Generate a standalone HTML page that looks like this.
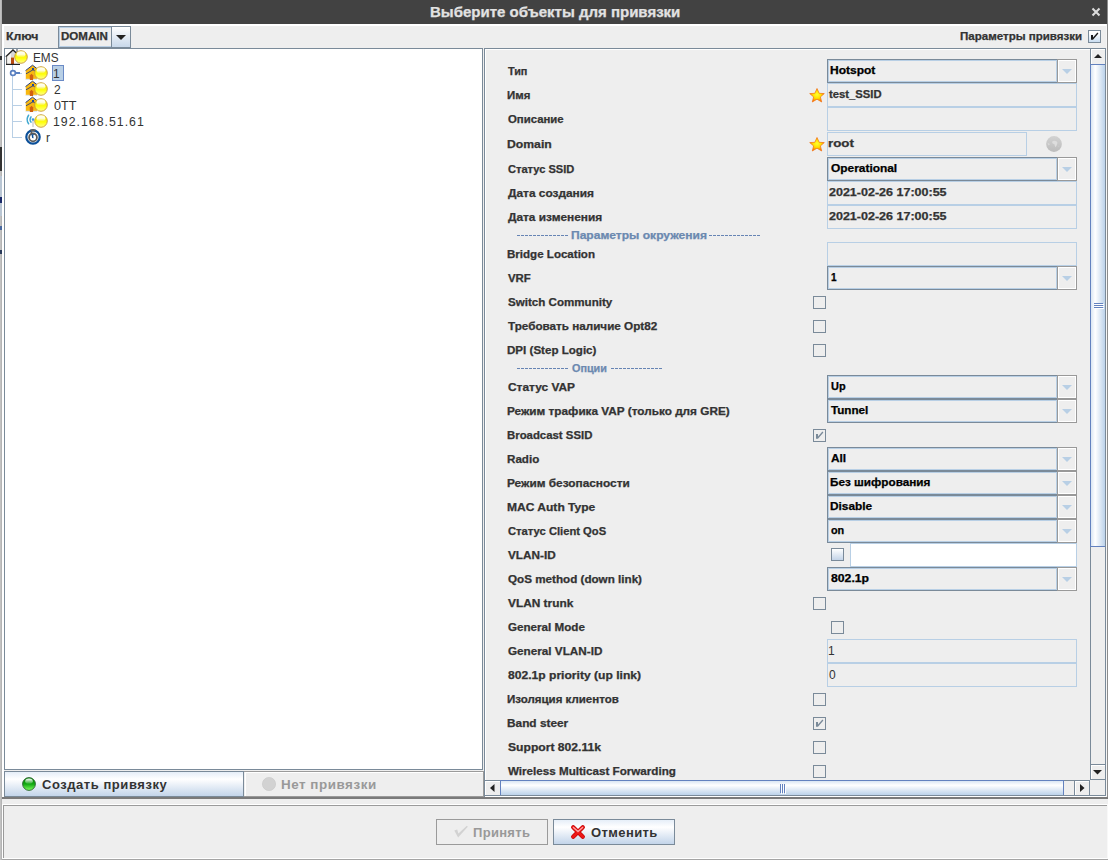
<!DOCTYPE html><html><head><meta charset="utf-8"><style>
html,body{margin:0;padding:0;width:1108px;height:860px;overflow:hidden;background:#eeeeee;position:relative;font-family:"Liberation Sans",sans-serif}
div{box-sizing:border-box}
.t{position:absolute;white-space:nowrap;line-height:1;transform-origin:0 0}
.b{-webkit-text-stroke:0.25px currentColor}
svg{position:absolute;overflow:visible}
</style></head><body>
<div style="position:absolute;left:0px;top:0px;width:2px;height:860px;background:#c2c2c2"></div>
<div style="position:absolute;left:1px;top:0px;width:1px;height:860px;background:#b4b4b4"></div>
<div style="position:absolute;left:0px;top:147px;width:2px;height:24px;background:#333333"></div>
<div style="position:absolute;left:0px;top:176px;width:2px;height:40px;background:#b9c6d4"></div>
<div style="position:absolute;left:0px;top:197px;width:2px;height:6px;background:#1a2a6a"></div>
<div style="position:absolute;left:0px;top:56px;width:2px;height:4px;background:#333"></div>
<div style="position:absolute;left:0px;top:226px;width:2px;height:4px;background:#4a6aa0"></div>
<div style="position:absolute;left:0px;top:250px;width:2px;height:4px;background:#2a3a5a"></div>
<div style="position:absolute;left:2px;top:0px;width:1106px;height:24px;background:#424242"></div>
<div class="t b" style="left:429.93px;top:5px;font-size:14px;font-weight:bold;color:#e2e2e2;transform:scaleX(1.0720);">Выберите объекты для привязки</div>
<svg style="left:1091px;top:7px" width="10" height="10"><path d="M1.5 1.5L8.5 8.5M8.5 1.5L1.5 8.5" stroke="#dcdcdc" stroke-width="2.1"/></svg>
<div style="position:absolute;left:2px;top:24px;width:1105px;height:2px;background:#ffffff"></div>
<div style="position:absolute;left:2px;top:24px;width:2px;height:836px;background:#ffffff"></div>
<div style="position:absolute;left:1106px;top:24px;width:1px;height:836px;background:#f6f6f6"></div>
<div style="position:absolute;left:1107px;top:0px;width:1px;height:799px;background:#8c8c8c"></div>
<div class="t b" style="left:5.77px;top:32px;font-size:10px;font-weight:bold;color:#333;transform:scaleX(1.2280);">Ключ</div>
<div style="position:absolute;left:58px;top:26px;width:73px;height:22px;border:1px solid #7a8a99;background:#eeeeee"></div>
<div style="position:absolute;left:59px;top:27px;width:52px;height:20px;border:1px solid #b8cfe5;border-right:0"></div>
<div class="t b" style="left:60.85px;top:32px;font-size:10px;font-weight:bold;color:#333;transform:scaleX(1.1538);">DOMAIN</div>
<div style="position:absolute;left:111px;top:26px;width:20px;height:22px;border:1px solid #7a8a99;background:linear-gradient(#ffffff,#c8d8ea)"></div>
<svg style="left:116px;top:35px" width="10" height="5"><path d="M0 0H10L5 5Z" fill="#222"/></svg>
<div class="t b" style="left:959.85px;top:32px;font-size:10px;font-weight:bold;color:#333;transform:scaleX(1.1538);">Параметры привязки</div>
<div style="position:absolute;left:1088px;top:30px;width:13px;height:13px;border:1px solid #7a8a99;background:linear-gradient(#ffffff 20%,#c8dcf0)"></div>
<svg style="left:1089px;top:31px" width="11" height="11"><path d="M2 4H4V6.6L8.4 1.6L9.4 2.6L4 8.8H2Z" fill="#1a1a1a"/></svg>
<div style="position:absolute;left:4px;top:48px;width:479px;height:722px;border:1px solid #7a8a99;background:#ffffff"></div>
<div style="position:absolute;left:12px;top:64px;width:1px;height:74px;background:#b8cfe5"></div>
<div style="position:absolute;left:13px;top:73px;width:9px;height:1px;background:#b8cfe5"></div>
<div style="position:absolute;left:13px;top:89px;width:9px;height:1px;background:#b8cfe5"></div>
<div style="position:absolute;left:13px;top:105px;width:9px;height:1px;background:#b8cfe5"></div>
<div style="position:absolute;left:13px;top:121px;width:9px;height:1px;background:#b8cfe5"></div>
<div style="position:absolute;left:13px;top:137px;width:9px;height:1px;background:#b8cfe5"></div>
<svg style="left:9px;top:69px" width="14" height="8"><rect x="6" y="3" width="5" height="2" fill="#5a80c0"/><circle cx="4" cy="4" r="2.4" fill="#fff" stroke="#5a80c0" stroke-width="1.7"/></svg>
<svg style="left:5px;top:48px" width="16" height="17"><rect x="11" y="1" width="2" height="4" fill="#9aa0a8"/><path d="M1.5 8.5L8 2.5L14.5 8.5V16H1.5Z" fill="#f6f4f0"/><path d="M6 4.5L8 3L10 4.5V9H6Z" fill="#d8d8d8"/><path d="M0.8 8.8L8 2L13.5 7" stroke="#222" stroke-width="1.3" fill="none"/><path d="M1.6 8.5V16" stroke="#555" stroke-width="0.9"/><rect x="6" y="9.5" width="3" height="6.5" fill="#b84a10"/><rect x="1" y="15.8" width="14" height="1.2" fill="#222"/></svg>
<svg style="left:14px;top:50px" width="14" height="14"><defs><linearGradient id="ybe" x1="0" y1="0" x2="0" y2="1"><stop offset="0" stop-color="#f0e000"/><stop offset="0.6" stop-color="#ffff10"/><stop offset="1" stop-color="#ffff90"/></linearGradient><linearGradient id="yhe" x1="0" y1="0" x2="0" y2="1"><stop offset="0" stop-color="#ffffff"/><stop offset="0.5" stop-color="#ffffff" stop-opacity="0.85"/><stop offset="1" stop-color="#ffffff" stop-opacity="0"/></linearGradient></defs><circle cx="7" cy="7" r="6.3" fill="url(#ybe)" stroke="#c89a40" stroke-width="0.9"/><ellipse cx="7" cy="4.4" rx="4.4" ry="3.1" fill="url(#yhe)"/></svg>
<div class="t" style="left:33.02px;top:52px;font-size:12px;font-weight:normal;color:#333;transform:scaleX(0.9800);">EMS</div>
<svg style="left:25px;top:64px" width="14" height="16"><path d="M0.8 6.5L7.5 1.2L12 4.5V15.5H0.8Z" fill="#f8b810"/><path d="M0.5 6.6L7.5 1.2L12.5 5" stroke="#2a3f7a" stroke-width="1" fill="none"/><path d="M1 9.8L8 5.8L10 7" stroke="#2a3f7a" stroke-width="0.9" fill="none"/><rect x="7" y="4" width="2" height="2" fill="#1a4aa0"/><path d="M4.8 16V11.5L6.5 9.8L8.2 11.5V16Z" fill="#d06010"/><rect x="0.8" y="14.8" width="3.8" height="1.2" fill="#dce6f2"/><rect x="8.2" y="14.8" width="3.8" height="1.2" fill="#dce6f2"/></svg>
<svg style="left:34px;top:66px" width="14" height="14"><defs><linearGradient id="yb0" x1="0" y1="0" x2="0" y2="1"><stop offset="0" stop-color="#f0e000"/><stop offset="0.6" stop-color="#ffff10"/><stop offset="1" stop-color="#ffff90"/></linearGradient><linearGradient id="yh0" x1="0" y1="0" x2="0" y2="1"><stop offset="0" stop-color="#ffffff"/><stop offset="0.5" stop-color="#ffffff" stop-opacity="0.85"/><stop offset="1" stop-color="#ffffff" stop-opacity="0"/></linearGradient></defs><circle cx="7" cy="7" r="6.3" fill="url(#yb0)" stroke="#c89a40" stroke-width="0.9"/><ellipse cx="7" cy="4.4" rx="4.4" ry="3.1" fill="url(#yh0)"/></svg>
<svg style="left:25px;top:80px" width="14" height="16"><path d="M0.8 6.5L7.5 1.2L12 4.5V15.5H0.8Z" fill="#f8b810"/><path d="M0.5 6.6L7.5 1.2L12.5 5" stroke="#2a3f7a" stroke-width="1" fill="none"/><path d="M1 9.8L8 5.8L10 7" stroke="#2a3f7a" stroke-width="0.9" fill="none"/><rect x="7" y="4" width="2" height="2" fill="#1a4aa0"/><path d="M4.8 16V11.5L6.5 9.8L8.2 11.5V16Z" fill="#d06010"/><rect x="0.8" y="14.8" width="3.8" height="1.2" fill="#dce6f2"/><rect x="8.2" y="14.8" width="3.8" height="1.2" fill="#dce6f2"/></svg>
<svg style="left:34px;top:82px" width="14" height="14"><defs><linearGradient id="yb1" x1="0" y1="0" x2="0" y2="1"><stop offset="0" stop-color="#f0e000"/><stop offset="0.6" stop-color="#ffff10"/><stop offset="1" stop-color="#ffff90"/></linearGradient><linearGradient id="yh1" x1="0" y1="0" x2="0" y2="1"><stop offset="0" stop-color="#ffffff"/><stop offset="0.5" stop-color="#ffffff" stop-opacity="0.85"/><stop offset="1" stop-color="#ffffff" stop-opacity="0"/></linearGradient></defs><circle cx="7" cy="7" r="6.3" fill="url(#yb1)" stroke="#c89a40" stroke-width="0.9"/><ellipse cx="7" cy="4.4" rx="4.4" ry="3.1" fill="url(#yh1)"/></svg>
<svg style="left:25px;top:96px" width="14" height="16"><path d="M0.8 6.5L7.5 1.2L12 4.5V15.5H0.8Z" fill="#f8b810"/><path d="M0.5 6.6L7.5 1.2L12.5 5" stroke="#2a3f7a" stroke-width="1" fill="none"/><path d="M1 9.8L8 5.8L10 7" stroke="#2a3f7a" stroke-width="0.9" fill="none"/><rect x="7" y="4" width="2" height="2" fill="#1a4aa0"/><path d="M4.8 16V11.5L6.5 9.8L8.2 11.5V16Z" fill="#d06010"/><rect x="0.8" y="14.8" width="3.8" height="1.2" fill="#dce6f2"/><rect x="8.2" y="14.8" width="3.8" height="1.2" fill="#dce6f2"/></svg>
<svg style="left:34px;top:98px" width="14" height="14"><defs><linearGradient id="yb2" x1="0" y1="0" x2="0" y2="1"><stop offset="0" stop-color="#f0e000"/><stop offset="0.6" stop-color="#ffff10"/><stop offset="1" stop-color="#ffff90"/></linearGradient><linearGradient id="yh2" x1="0" y1="0" x2="0" y2="1"><stop offset="0" stop-color="#ffffff"/><stop offset="0.5" stop-color="#ffffff" stop-opacity="0.85"/><stop offset="1" stop-color="#ffffff" stop-opacity="0"/></linearGradient></defs><circle cx="7" cy="7" r="6.3" fill="url(#yb2)" stroke="#c89a40" stroke-width="0.9"/><ellipse cx="7" cy="4.4" rx="4.4" ry="3.1" fill="url(#yh2)"/></svg>
<div style="position:absolute;left:52px;top:65px;width:12px;height:16px;border:1px solid #6a8ac6;background:#b8cfe5"></div>
<div class="t" style="left:53.00px;top:68px;font-size:12px;font-weight:normal;color:#333;">1</div>
<div class="t" style="left:54.00px;top:84px;font-size:12px;font-weight:normal;color:#333;">2</div>
<div class="t" style="left:54.00px;top:100px;font-size:12px;font-weight:normal;color:#333;transform:scaleX(1.0476);">0TT</div>
<svg style="left:25px;top:113px" width="12" height="16"><path d="M3.6 2.2Q0.6 6.5 3.6 10.8M6 3.8Q4.2 6.5 6 9.2" stroke="#40a8d0" stroke-width="1.5" fill="none" stroke-linecap="round"/><rect x="7.3" y="7" width="1.4" height="7" fill="#d0d0d0"/><circle cx="8" cy="6.5" r="1.3" fill="#3a98e0"/></svg>
<svg style="left:34px;top:114px" width="14" height="14"><defs><linearGradient id="ybw" x1="0" y1="0" x2="0" y2="1"><stop offset="0" stop-color="#f0e000"/><stop offset="0.6" stop-color="#ffff10"/><stop offset="1" stop-color="#ffff90"/></linearGradient><linearGradient id="yhw" x1="0" y1="0" x2="0" y2="1"><stop offset="0" stop-color="#ffffff"/><stop offset="0.5" stop-color="#ffffff" stop-opacity="0.85"/><stop offset="1" stop-color="#ffffff" stop-opacity="0"/></linearGradient></defs><circle cx="7" cy="7" r="6.3" fill="url(#ybw)" stroke="#c89a40" stroke-width="0.9"/><ellipse cx="7" cy="4.4" rx="4.4" ry="3.1" fill="url(#yhw)"/></svg>
<div class="t" style="left:52.98px;top:116px;font-size:12px;font-weight:normal;color:#333;transform:scaleX(1.0230);letter-spacing:1px">192.168.51.61</div>
<svg style="left:25px;top:129px" width="16" height="16"><circle cx="8" cy="8" r="6.7" fill="#fff" stroke="#0b4f98" stroke-width="2.2"/><path d="M5.6 1.6A6.7 6.7 0 0 1 10.4 1.6" stroke="#606060" stroke-width="2.3" fill="none"/><circle cx="8" cy="8.4" r="3.9" fill="none" stroke="#5a5a5a" stroke-width="1.8"/><path d="M6.2 2.5L6.8 5.2" stroke="#5a5a5a" stroke-width="1.6"/><path d="M6.4 5.2H9.6L8.2 6.6L8.6 9.2L7.2 9Z" fill="#0b4f98"/></svg>
<div class="t" style="left:46.00px;top:132px;font-size:12px;font-weight:normal;color:#333;">r</div>
<div style="position:absolute;left:4px;top:771px;width:240px;height:26px;border:1px solid #7a8a99;background:linear-gradient(#e6eef8 0%,#ffffff 30%,#c3d5ea 100%)"></div>
<div style="position:absolute;left:244px;top:771px;width:240px;height:26px;border:1px solid #9a9a9a;border-left:0;background:#eeeeee"></div>
<div style="position:absolute;left:245px;top:772px;width:238px;height:24px;border-top:1px solid #fff;border-left:1px solid #fff"></div>
<div class="t b" style="left:42.00px;top:778px;font-size:13px;font-weight:bold;color:#333;letter-spacing:0.55px;-webkit-text-stroke:0">Создать привязку</div>
<div class="t b" style="left:280.97px;top:778px;font-size:13px;font-weight:bold;color:#999;transform:scaleX(1.0333);letter-spacing:0.5px;-webkit-text-stroke:0">Нет привязки</div>
<svg style="left:22px;top:777px" width="14" height="14"><defs><linearGradient id="gb" x1="0" y1="0" x2="0" y2="1"><stop offset="0" stop-color="#008a00"/><stop offset="0.5" stop-color="#10a810"/><stop offset="1" stop-color="#80ff60"/></linearGradient><linearGradient id="gh" x1="0" y1="0" x2="0" y2="1"><stop offset="0" stop-color="#ffffff"/><stop offset="1" stop-color="#ffffff" stop-opacity="0.1"/></linearGradient></defs><circle cx="7" cy="7" r="6.4" fill="url(#gb)" stroke="#2a6030" stroke-width="0.9"/><ellipse cx="7" cy="4.2" rx="3.8" ry="2.6" fill="url(#gh)"/></svg>
<svg style="left:262px;top:777px" width="14" height="14"><circle cx="7" cy="7" r="6.6" fill="#d2d2d2" stroke="#c6c6c6" stroke-width="0.6"/></svg>
<div style="position:absolute;left:484px;top:48px;width:622px;height:749px;border:1px solid #7a8a99;border-bottom:0;background:#eeeeee"></div>
<div style="position:absolute;left:485px;top:49px;width:605px;height:1px;background:#ffffff"></div>
<div style="position:absolute;left:485px;top:49px;width:1px;height:731px;background:#ffffff"></div>
<div class="t b" style="left:508.00px;top:67px;font-size:10px;font-weight:bold;color:#333;transform:scaleX(1.0833);">Тип</div>
<div style="position:absolute;left:827px;top:59px;width:250px;height:24px;border:1px solid #7a8a99;background:#eeeeee"></div>
<div style="position:absolute;left:828px;top:60px;width:229px;height:22px;border:1px solid #b8cfe5"></div>
<div style="position:absolute;left:1057px;top:59px;width:20px;height:24px;border:1px solid #999999;background:#eeeeee"></div>
<div style="position:absolute;left:1058px;top:60px;width:18px;height:22px;border:1px solid #ffffff"></div>
<svg style="left:1062px;top:69px" width="10" height="5"><path d="M0 0H10L5 5Z" fill="#b8cfe5"/></svg>
<div class="t b" style="left:829.80px;top:66px;font-size:10px;font-weight:bold;color:#000;transform:scaleX(1.2000);">Hotspot</div>
<div class="t b" style="left:506.86px;top:91px;font-size:10px;font-weight:bold;color:#333;transform:scaleX(1.1421);">Имя</div>
<div style="position:absolute;left:827px;top:83px;width:250px;height:24px;border:1px solid #b8cfe5;background:#eeeeee"></div>
<div class="t b" style="left:829.00px;top:90px;font-size:10px;font-weight:bold;color:#333;transform:scaleX(1.1277);">test_SSID</div>
<div class="t b" style="left:508.00px;top:115px;font-size:10px;font-weight:bold;color:#333;transform:scaleX(1.1367);">Описание</div>
<div style="position:absolute;left:827px;top:107px;width:250px;height:24px;border:1px solid #b8cfe5;background:#eeeeee"></div>
<div class="t b" style="left:506.78px;top:140px;font-size:10px;font-weight:bold;color:#333;transform:scaleX(1.2200);">Domain</div>
<div style="position:absolute;left:827px;top:132px;width:200px;height:24px;border:1px solid #b8cfe5;background:#eeeeee"></div>
<div class="t b" style="left:827.67px;top:139px;font-size:10px;font-weight:bold;color:#333;transform:scaleX(1.3333);">root</div>
<div class="t b" style="left:508.00px;top:165px;font-size:10px;font-weight:bold;color:#333;transform:scaleX(1.1083);">Статус SSID</div>
<div style="position:absolute;left:827px;top:157px;width:250px;height:24px;border:1px solid #7a8a99;background:#eeeeee"></div>
<div style="position:absolute;left:828px;top:158px;width:229px;height:22px;border:1px solid #b8cfe5"></div>
<div style="position:absolute;left:1057px;top:157px;width:20px;height:24px;border:1px solid #999999;background:#eeeeee"></div>
<div style="position:absolute;left:1058px;top:158px;width:18px;height:22px;border:1px solid #ffffff"></div>
<svg style="left:1062px;top:167px" width="10" height="5"><path d="M0 0H10L5 5Z" fill="#b8cfe5"/></svg>
<div class="t b" style="left:831.00px;top:164px;font-size:10px;font-weight:bold;color:#000;transform:scaleX(1.1909);">Operational</div>
<div class="t b" style="left:508.00px;top:189px;font-size:10px;font-weight:bold;color:#333;transform:scaleX(1.1889);">Дата создания</div>
<div style="position:absolute;left:827px;top:181px;width:250px;height:24px;border:1px solid #b8cfe5;background:#eeeeee"></div>
<div class="t b" style="left:829.00px;top:188px;font-size:10px;font-weight:bold;color:#333;transform:scaleX(1.2511);">2021-02-26 17:00:55</div>
<div class="t b" style="left:508.00px;top:213px;font-size:10px;font-weight:bold;color:#333;transform:scaleX(1.1861);">Дата изменения</div>
<div style="position:absolute;left:827px;top:205px;width:250px;height:24px;border:1px solid #b8cfe5;background:#eeeeee"></div>
<div class="t b" style="left:829.00px;top:212px;font-size:10px;font-weight:bold;color:#333;transform:scaleX(1.2511);">2021-02-26 17:00:55</div>
<div class="t b" style="left:506.84px;top:250px;font-size:10px;font-weight:bold;color:#333;transform:scaleX(1.1560);">Bridge Location</div>
<div style="position:absolute;left:827px;top:242px;width:250px;height:24px;border:1px solid #b8cfe5;background:#eeeeee"></div>
<div class="t b" style="left:508.00px;top:274px;font-size:10px;font-weight:bold;color:#333;transform:scaleX(1.1400);">VRF</div>
<div style="position:absolute;left:827px;top:266px;width:250px;height:24px;border:1px solid #7a8a99;background:#eeeeee"></div>
<div style="position:absolute;left:828px;top:267px;width:229px;height:22px;border:1px solid #b8cfe5"></div>
<div style="position:absolute;left:1057px;top:266px;width:20px;height:24px;border:1px solid #999999;background:#eeeeee"></div>
<div style="position:absolute;left:1058px;top:267px;width:18px;height:22px;border:1px solid #ffffff"></div>
<svg style="left:1062px;top:276px" width="10" height="5"><path d="M0 0H10L5 5Z" fill="#b8cfe5"/></svg>
<div class="t b" style="left:831.00px;top:273px;font-size:10px;font-weight:bold;color:#000;">1</div>
<div class="t b" style="left:508.00px;top:298px;font-size:10px;font-weight:bold;color:#333;transform:scaleX(1.1589);">Switch Community</div>
<div style="position:absolute;left:813px;top:296px;width:13px;height:13px;border:1px solid #7a8a99;background:#eeeeee"></div>
<div class="t b" style="left:508.00px;top:322px;font-size:10px;font-weight:bold;color:#333;transform:scaleX(1.1685);">Требовать наличие Opt82</div>
<div style="position:absolute;left:813px;top:320px;width:13px;height:13px;border:1px solid #7a8a99;background:#eeeeee"></div>
<div class="t b" style="left:506.84px;top:346px;font-size:10px;font-weight:bold;color:#333;transform:scaleX(1.1579);">DPI (Step Logic)</div>
<div style="position:absolute;left:813px;top:344px;width:13px;height:13px;border:1px solid #7a8a99;background:#eeeeee"></div>
<div class="t b" style="left:508.00px;top:383px;font-size:10px;font-weight:bold;color:#333;transform:scaleX(1.1893);">Статус VAP</div>
<div style="position:absolute;left:827px;top:375px;width:250px;height:24px;border:1px solid #7a8a99;background:#eeeeee"></div>
<div style="position:absolute;left:828px;top:376px;width:229px;height:22px;border:1px solid #b8cfe5"></div>
<div style="position:absolute;left:1057px;top:375px;width:20px;height:24px;border:1px solid #999999;background:#eeeeee"></div>
<div style="position:absolute;left:1058px;top:376px;width:18px;height:22px;border:1px solid #ffffff"></div>
<svg style="left:1062px;top:385px" width="10" height="5"><path d="M0 0H10L5 5Z" fill="#b8cfe5"/></svg>
<div class="t b" style="left:831.00px;top:382px;font-size:10px;font-weight:bold;color:#000;transform:scaleX(1.0923);">Up</div>
<div class="t b" style="left:506.82px;top:407px;font-size:10px;font-weight:bold;color:#333;transform:scaleX(1.1782);">Режим трафика VAP (только для GRE)</div>
<div style="position:absolute;left:827px;top:399px;width:250px;height:24px;border:1px solid #7a8a99;background:#eeeeee"></div>
<div style="position:absolute;left:828px;top:400px;width:229px;height:22px;border:1px solid #b8cfe5"></div>
<div style="position:absolute;left:1057px;top:399px;width:20px;height:24px;border:1px solid #999999;background:#eeeeee"></div>
<div style="position:absolute;left:1058px;top:400px;width:18px;height:22px;border:1px solid #ffffff"></div>
<svg style="left:1062px;top:409px" width="10" height="5"><path d="M0 0H10L5 5Z" fill="#b8cfe5"/></svg>
<div class="t b" style="left:831.00px;top:406px;font-size:10px;font-weight:bold;color:#000;transform:scaleX(1.1656);">Tunnel</div>
<div class="t b" style="left:506.86px;top:431px;font-size:10px;font-weight:bold;color:#333;transform:scaleX(1.1378);">Broadcast SSID</div>
<div style="position:absolute;left:813px;top:429px;width:13px;height:13px;border:1px solid #7a8a99;background:#eeeeee"></div>
<svg style="left:814px;top:430px" width="11" height="11"><path d="M2 4H4V6.6L8.4 1.6L9.4 2.6L4 8.8H2Z" fill="#7a8a99"/></svg>
<div class="t b" style="left:506.84px;top:455px;font-size:10px;font-weight:bold;color:#333;transform:scaleX(1.1630);">Radio</div>
<div style="position:absolute;left:827px;top:447px;width:250px;height:24px;border:1px solid #7a8a99;background:#eeeeee"></div>
<div style="position:absolute;left:828px;top:448px;width:229px;height:22px;border:1px solid #b8cfe5"></div>
<div style="position:absolute;left:1057px;top:447px;width:20px;height:24px;border:1px solid #999999;background:#eeeeee"></div>
<div style="position:absolute;left:1058px;top:448px;width:18px;height:22px;border:1px solid #ffffff"></div>
<svg style="left:1062px;top:457px" width="10" height="5"><path d="M0 0H10L5 5Z" fill="#b8cfe5"/></svg>
<div class="t b" style="left:831.00px;top:454px;font-size:10px;font-weight:bold;color:#000;transform:scaleX(1.1833);">All</div>
<div class="t b" style="left:506.82px;top:479px;font-size:10px;font-weight:bold;color:#333;transform:scaleX(1.1843);">Режим безопасности</div>
<div style="position:absolute;left:827px;top:471px;width:250px;height:24px;border:1px solid #7a8a99;background:#eeeeee"></div>
<div style="position:absolute;left:828px;top:472px;width:229px;height:22px;border:1px solid #b8cfe5"></div>
<div style="position:absolute;left:1057px;top:471px;width:20px;height:24px;border:1px solid #999999;background:#eeeeee"></div>
<div style="position:absolute;left:1058px;top:472px;width:18px;height:22px;border:1px solid #ffffff"></div>
<svg style="left:1062px;top:481px" width="10" height="5"><path d="M0 0H10L5 5Z" fill="#b8cfe5"/></svg>
<div class="t b" style="left:829.83px;top:478px;font-size:10px;font-weight:bold;color:#000;transform:scaleX(1.1738);">Без шифрования</div>
<div class="t b" style="left:506.80px;top:503px;font-size:10px;font-weight:bold;color:#333;transform:scaleX(1.2042);">MAC Auth Type</div>
<div style="position:absolute;left:827px;top:495px;width:250px;height:24px;border:1px solid #7a8a99;background:#eeeeee"></div>
<div style="position:absolute;left:828px;top:496px;width:229px;height:22px;border:1px solid #b8cfe5"></div>
<div style="position:absolute;left:1057px;top:495px;width:20px;height:24px;border:1px solid #999999;background:#eeeeee"></div>
<div style="position:absolute;left:1058px;top:496px;width:18px;height:22px;border:1px solid #ffffff"></div>
<svg style="left:1062px;top:505px" width="10" height="5"><path d="M0 0H10L5 5Z" fill="#b8cfe5"/></svg>
<div class="t b" style="left:829.81px;top:502px;font-size:10px;font-weight:bold;color:#000;transform:scaleX(1.1853);">Disable</div>
<div class="t b" style="left:508.00px;top:527px;font-size:10px;font-weight:bold;color:#333;transform:scaleX(1.1205);">Статус Client QoS</div>
<div style="position:absolute;left:827px;top:519px;width:250px;height:24px;border:1px solid #7a8a99;background:#eeeeee"></div>
<div style="position:absolute;left:828px;top:520px;width:229px;height:22px;border:1px solid #b8cfe5"></div>
<div style="position:absolute;left:1057px;top:519px;width:20px;height:24px;border:1px solid #999999;background:#eeeeee"></div>
<div style="position:absolute;left:1058px;top:520px;width:18px;height:22px;border:1px solid #ffffff"></div>
<svg style="left:1062px;top:529px" width="10" height="5"><path d="M0 0H10L5 5Z" fill="#b8cfe5"/></svg>
<div class="t b" style="left:831.00px;top:526px;font-size:10px;font-weight:bold;color:#000;transform:scaleX(1.0833);">on</div>
<div class="t b" style="left:508.00px;top:551px;font-size:10px;font-weight:bold;color:#333;transform:scaleX(1.1750);">VLAN-ID</div>
<div style="position:absolute;left:831px;top:548px;width:13px;height:13px;border:1px solid #7a8a99;background:linear-gradient(#ffffff,#c3d4e8)"></div>
<div style="position:absolute;left:850px;top:543px;width:227px;height:24px;border:1px solid #b8cfe5;background:#ffffff"></div>
<div class="t b" style="left:508.00px;top:575px;font-size:10px;font-weight:bold;color:#333;transform:scaleX(1.1652);">QoS method (down link)</div>
<div style="position:absolute;left:827px;top:567px;width:250px;height:24px;border:1px solid #7a8a99;background:#eeeeee"></div>
<div style="position:absolute;left:828px;top:568px;width:229px;height:22px;border:1px solid #b8cfe5"></div>
<div style="position:absolute;left:1057px;top:567px;width:20px;height:24px;border:1px solid #999999;background:#eeeeee"></div>
<div style="position:absolute;left:1058px;top:568px;width:18px;height:22px;border:1px solid #ffffff"></div>
<svg style="left:1062px;top:577px" width="10" height="5"><path d="M0 0H10L5 5Z" fill="#b8cfe5"/></svg>
<div class="t b" style="left:831.00px;top:574px;font-size:10px;font-weight:bold;color:#000;transform:scaleX(1.2226);">802.1p</div>
<div class="t b" style="left:508.00px;top:599px;font-size:10px;font-weight:bold;color:#333;transform:scaleX(1.1873);">VLAN trunk</div>
<div style="position:absolute;left:813px;top:597px;width:13px;height:13px;border:1px solid #7a8a99;background:#eeeeee"></div>
<div class="t b" style="left:508.00px;top:623px;font-size:10px;font-weight:bold;color:#333;transform:scaleX(1.1621);">General Mode</div>
<div style="position:absolute;left:831px;top:621px;width:13px;height:13px;border:1px solid #7a8a99;background:#eeeeee"></div>
<div class="t b" style="left:508.00px;top:647px;font-size:10px;font-weight:bold;color:#333;transform:scaleX(1.1713);">General VLAN-ID</div>
<div style="position:absolute;left:827px;top:639px;width:250px;height:24px;border:1px solid #b8cfe5;background:#eeeeee"></div>
<div class="t" style="left:828.00px;top:645px;font-size:12px;font-weight:normal;color:#333;">1</div>
<div class="t b" style="left:508.00px;top:671px;font-size:10px;font-weight:bold;color:#333;transform:scaleX(1.2091);">802.1p priority (up link)</div>
<div style="position:absolute;left:827px;top:663px;width:250px;height:24px;border:1px solid #b8cfe5;background:#eeeeee"></div>
<div class="t" style="left:829.00px;top:669px;font-size:12px;font-weight:normal;color:#333;">0</div>
<div class="t b" style="left:506.85px;top:695px;font-size:10px;font-weight:bold;color:#333;transform:scaleX(1.1510);">Изоляция клиентов</div>
<div style="position:absolute;left:813px;top:693px;width:13px;height:13px;border:1px solid #7a8a99;background:#eeeeee"></div>
<div class="t b" style="left:506.82px;top:719px;font-size:10px;font-weight:bold;color:#333;transform:scaleX(1.1843);">Band steer</div>
<div style="position:absolute;left:813px;top:717px;width:13px;height:13px;border:1px solid #7a8a99;background:#eeeeee"></div>
<svg style="left:814px;top:718px" width="11" height="11"><path d="M2 4H4V6.6L8.4 1.6L9.4 2.6L4 8.8H2Z" fill="#7a8a99"/></svg>
<div class="t b" style="left:508.00px;top:743px;font-size:10px;font-weight:bold;color:#333;transform:scaleX(1.2130);">Support 802.11k</div>
<div style="position:absolute;left:813px;top:741px;width:13px;height:13px;border:1px solid #7a8a99;background:#eeeeee"></div>
<div class="t b" style="left:508.00px;top:767px;font-size:10px;font-weight:bold;color:#333;transform:scaleX(1.1625);">Wireless Multicast Forwarding</div>
<div style="position:absolute;left:813px;top:765px;width:13px;height:13px;border:1px solid #7a8a99;background:#eeeeee"></div>
<div style="position:absolute;left:517px;top:235px;width:3px;height:1px;background:#6684b4"></div>
<div style="position:absolute;left:521px;top:235px;width:3px;height:1px;background:#6684b4"></div>
<div style="position:absolute;left:525px;top:235px;width:3px;height:1px;background:#6684b4"></div>
<div style="position:absolute;left:529px;top:235px;width:3px;height:1px;background:#6684b4"></div>
<div style="position:absolute;left:533px;top:235px;width:3px;height:1px;background:#6684b4"></div>
<div style="position:absolute;left:537px;top:235px;width:3px;height:1px;background:#6684b4"></div>
<div style="position:absolute;left:541px;top:235px;width:3px;height:1px;background:#6684b4"></div>
<div style="position:absolute;left:545px;top:235px;width:3px;height:1px;background:#6684b4"></div>
<div style="position:absolute;left:549px;top:235px;width:3px;height:1px;background:#6684b4"></div>
<div style="position:absolute;left:553px;top:235px;width:3px;height:1px;background:#6684b4"></div>
<div style="position:absolute;left:557px;top:235px;width:3px;height:1px;background:#6684b4"></div>
<div style="position:absolute;left:561px;top:235px;width:3px;height:1px;background:#6684b4"></div>
<div style="position:absolute;left:565px;top:235px;width:3px;height:1px;background:#6684b4"></div>
<div class="t b" style="left:570.80px;top:231px;font-size:10px;font-weight:bold;color:#6b89b0;transform:scaleX(1.2045);">Параметры окружения</div>
<div style="position:absolute;left:709px;top:235px;width:3px;height:1px;background:#6684b4"></div>
<div style="position:absolute;left:713px;top:235px;width:3px;height:1px;background:#6684b4"></div>
<div style="position:absolute;left:717px;top:235px;width:3px;height:1px;background:#6684b4"></div>
<div style="position:absolute;left:721px;top:235px;width:3px;height:1px;background:#6684b4"></div>
<div style="position:absolute;left:725px;top:235px;width:3px;height:1px;background:#6684b4"></div>
<div style="position:absolute;left:729px;top:235px;width:3px;height:1px;background:#6684b4"></div>
<div style="position:absolute;left:733px;top:235px;width:3px;height:1px;background:#6684b4"></div>
<div style="position:absolute;left:737px;top:235px;width:3px;height:1px;background:#6684b4"></div>
<div style="position:absolute;left:741px;top:235px;width:3px;height:1px;background:#6684b4"></div>
<div style="position:absolute;left:745px;top:235px;width:3px;height:1px;background:#6684b4"></div>
<div style="position:absolute;left:749px;top:235px;width:3px;height:1px;background:#6684b4"></div>
<div style="position:absolute;left:753px;top:235px;width:3px;height:1px;background:#6684b4"></div>
<div style="position:absolute;left:757px;top:235px;width:3px;height:1px;background:#6684b4"></div>
<div style="position:absolute;left:517px;top:368px;width:3px;height:1px;background:#6684b4"></div>
<div style="position:absolute;left:521px;top:368px;width:3px;height:1px;background:#6684b4"></div>
<div style="position:absolute;left:525px;top:368px;width:3px;height:1px;background:#6684b4"></div>
<div style="position:absolute;left:529px;top:368px;width:3px;height:1px;background:#6684b4"></div>
<div style="position:absolute;left:533px;top:368px;width:3px;height:1px;background:#6684b4"></div>
<div style="position:absolute;left:537px;top:368px;width:3px;height:1px;background:#6684b4"></div>
<div style="position:absolute;left:541px;top:368px;width:3px;height:1px;background:#6684b4"></div>
<div style="position:absolute;left:545px;top:368px;width:3px;height:1px;background:#6684b4"></div>
<div style="position:absolute;left:549px;top:368px;width:3px;height:1px;background:#6684b4"></div>
<div style="position:absolute;left:553px;top:368px;width:3px;height:1px;background:#6684b4"></div>
<div style="position:absolute;left:557px;top:368px;width:3px;height:1px;background:#6684b4"></div>
<div style="position:absolute;left:561px;top:368px;width:3px;height:1px;background:#6684b4"></div>
<div style="position:absolute;left:565px;top:368px;width:3px;height:1px;background:#6684b4"></div>
<div class="t b" style="left:572.00px;top:364px;font-size:10px;font-weight:bold;color:#6b89b0;transform:scaleX(1.0813);">Опции</div>
<div style="position:absolute;left:611px;top:368px;width:3px;height:1px;background:#6684b4"></div>
<div style="position:absolute;left:615px;top:368px;width:3px;height:1px;background:#6684b4"></div>
<div style="position:absolute;left:619px;top:368px;width:3px;height:1px;background:#6684b4"></div>
<div style="position:absolute;left:623px;top:368px;width:3px;height:1px;background:#6684b4"></div>
<div style="position:absolute;left:627px;top:368px;width:3px;height:1px;background:#6684b4"></div>
<div style="position:absolute;left:631px;top:368px;width:3px;height:1px;background:#6684b4"></div>
<div style="position:absolute;left:635px;top:368px;width:3px;height:1px;background:#6684b4"></div>
<div style="position:absolute;left:639px;top:368px;width:3px;height:1px;background:#6684b4"></div>
<div style="position:absolute;left:643px;top:368px;width:3px;height:1px;background:#6684b4"></div>
<div style="position:absolute;left:647px;top:368px;width:3px;height:1px;background:#6684b4"></div>
<div style="position:absolute;left:651px;top:368px;width:3px;height:1px;background:#6684b4"></div>
<div style="position:absolute;left:655px;top:368px;width:3px;height:1px;background:#6684b4"></div>
<div style="position:absolute;left:659px;top:368px;width:3px;height:1px;background:#6684b4"></div>
<svg style="left:809px;top:88px" width="16" height="15"><defs><radialGradient id="st83" cx="0.5" cy="0.45" r="0.55"><stop offset="0" stop-color="#ffff30"/><stop offset="0.5" stop-color="#ffe000"/><stop offset="1" stop-color="#ff7000"/></radialGradient></defs><path d="M8 0.5L10.2 5.3L15.3 5.6L11.4 8.9L12.7 14L8 11.2L3.3 14L4.6 8.9L0.7 5.6L5.8 5.3Z" fill="url(#st83)" stroke="#f07010" stroke-width="0.7"/></svg>
<svg style="left:809px;top:137px" width="16" height="15"><defs><radialGradient id="st132" cx="0.5" cy="0.45" r="0.55"><stop offset="0" stop-color="#ffff30"/><stop offset="0.5" stop-color="#ffe000"/><stop offset="1" stop-color="#ff7000"/></radialGradient></defs><path d="M8 0.5L10.2 5.3L15.3 5.6L11.4 8.9L12.7 14L8 11.2L3.3 14L4.6 8.9L0.7 5.6L5.8 5.3Z" fill="url(#st132)" stroke="#f07010" stroke-width="0.7"/></svg>
<svg style="left:1046px;top:136px" width="16" height="16"><defs><linearGradient id="glb" x1="0" y1="0" x2="0" y2="1"><stop offset="0" stop-color="#d2d2d2"/><stop offset="1" stop-color="#bcbcbc"/></linearGradient></defs><circle cx="8" cy="8" r="7.9" fill="url(#glb)"/><path d="M6.2 5.6Q8 4.2 10.5 5.2Q12.2 6.5 11 8.5Q10.3 10 9.6 11.3Q8.6 9.5 8.4 8.2Q7 8 6.2 7Z" fill="#dddddd"/><path d="M1.5 6.8Q3.2 7 4 8.6Q3.2 9.6 2.2 9.2Z" fill="#d6d6d6"/><path d="M12.5 9.5Q13.5 9.8 13 11.2Q12.2 11 12.5 9.5Z" fill="#d0d0d0"/></svg>
<div style="position:absolute;left:1090px;top:49px;width:16px;height:731px;border-left:1px solid #7a8a99;border-right:1px solid #7a8a99;background:#eeeeee"></div>
<div style="position:absolute;left:1090px;top:49px;width:16px;height:16px;border:1px solid #7a8a99;border-top:0;background:#eeeeee"></div>
<div style="position:absolute;left:1091px;top:49px;width:14px;height:15px;border-top:1px solid #fff;border-left:1px solid #fff"></div>
<svg style="left:1094px;top:54px" width="8" height="4"><path d="M0 4H8L4 0Z" fill="#222"/></svg>
<div style="position:absolute;left:1090px;top:64px;width:15px;height:483px;border:1px solid #6382bf;border-right:0;background:linear-gradient(90deg,#dae6f3 0%,#ffffff 30%,#bcd2ea 100%)"></div>
<div style="position:absolute;left:1094px;top:303px;width:9px;height:1px;background:#6382bf"></div>
<div style="position:absolute;left:1095px;top:304px;width:9px;height:1px;background:#ffffff"></div>
<div style="position:absolute;left:1094px;top:305px;width:9px;height:1px;background:#6382bf"></div>
<div style="position:absolute;left:1095px;top:306px;width:9px;height:1px;background:#ffffff"></div>
<div style="position:absolute;left:1094px;top:307px;width:9px;height:1px;background:#6382bf"></div>
<div style="position:absolute;left:1095px;top:308px;width:9px;height:1px;background:#ffffff"></div>
<div style="position:absolute;left:1090px;top:764px;width:16px;height:16px;border:1px solid #7a8a99;background:#eeeeee"></div>
<div style="position:absolute;left:1091px;top:765px;width:14px;height:14px;border-top:1px solid #fff;border-left:1px solid #fff"></div>
<svg style="left:1093px;top:770px" width="9" height="4.5"><path d="M0 0H9L4.5 4.5Z" fill="#222"/></svg>
<div style="position:absolute;left:485px;top:780px;width:605px;height:16px;border-top:1px solid #7a8a99;border-bottom:1px solid #7a8a99;background:#eeeeee"></div>
<div style="position:absolute;left:485px;top:780px;width:16px;height:16px;border:1px solid #7a8a99;border-left:0;background:#eeeeee"></div>
<div style="position:absolute;left:485px;top:781px;width:15px;height:14px;border-top:1px solid #fff;border-left:1px solid #fff"></div>
<svg style="left:490px;top:784px" width="5" height="8"><path d="M4.5 0V8L0 4Z" fill="#222"/></svg>
<div style="position:absolute;left:500px;top:780px;width:564px;height:15px;border:1px solid #6382bf;border-bottom:0;background:linear-gradient(#dae6f3 0%,#ffffff 30%,#bcd2ea 100%)"></div>
<div style="position:absolute;left:780px;top:784px;width:1px;height:9px;background:#6382bf"></div>
<div style="position:absolute;left:781px;top:785px;width:1px;height:9px;background:#ffffff"></div>
<div style="position:absolute;left:782px;top:784px;width:1px;height:9px;background:#6382bf"></div>
<div style="position:absolute;left:783px;top:785px;width:1px;height:9px;background:#ffffff"></div>
<div style="position:absolute;left:784px;top:784px;width:1px;height:9px;background:#6382bf"></div>
<div style="position:absolute;left:785px;top:785px;width:1px;height:9px;background:#ffffff"></div>
<div style="position:absolute;left:1074px;top:780px;width:16px;height:16px;border:1px solid #7a8a99;background:#eeeeee"></div>
<div style="position:absolute;left:1075px;top:781px;width:14px;height:14px;border-top:1px solid #fff;border-left:1px solid #fff"></div>
<svg style="left:1080px;top:784px" width="5" height="8"><path d="M0 0V8L4.5 4Z" fill="#222"/></svg>
<div style="position:absolute;left:1090px;top:780px;width:16px;height:16px;border-right:1px solid #7a8a99;border-bottom:1px solid #7a8a99;background:#eeeeee"></div>
<div style="position:absolute;left:485px;top:796px;width:621px;height:1px;background:#ffffff"></div>
<div style="position:absolute;left:2px;top:797px;width:1106px;height:2px;background:#7a7a7a"></div>
<div style="position:absolute;left:2px;top:799px;width:1106px;height:61px;background:#eeeeee"></div>
<div style="position:absolute;left:2px;top:804px;width:1106px;height:55px;border-top:1px solid #ffffff;border-left:1px solid #ffffff;border-bottom:1px solid #ffffff;border-right:1px solid #f8f8f8"></div>
<div style="position:absolute;left:3px;top:805px;width:1104px;height:53px;border-top:1px solid #9a9a9a;border-left:1px solid #9a9a9a"></div>
<div style="position:absolute;left:2px;top:859px;width:1106px;height:1px;background:#a4a4a4"></div>
<div style="position:absolute;left:436px;top:819px;width:112px;height:26px;border:1px solid #9a9a9a;background:#eeeeee"></div>
<div class="t b" style="left:473.00px;top:826px;font-size:13px;font-weight:bold;color:#999;letter-spacing:0.3px;-webkit-text-stroke:0">Принять</div>
<svg style="left:454px;top:825px" width="15" height="14"><path d="M0.3 5.4L3.2 4.6L4.4 8.4L12.9 0.8L13.8 1.7L4.1 12.6Z" fill="#d2d2d2"/></svg>
<div style="position:absolute;left:553px;top:819px;width:122px;height:26px;border:1px solid #7a8a99;background:linear-gradient(#e6eef8 0%,#ffffff 30%,#c3d5ea 100%)"></div>
<div class="t b" style="left:591.00px;top:826px;font-size:13px;font-weight:bold;color:#333;letter-spacing:0.4px;-webkit-text-stroke:0">Отменить</div>
<svg style="left:571px;top:825px" width="14" height="14"><path d="M2.2 2.2L11.8 11.8M11.8 2.2L2.2 11.8" stroke="#c20000" stroke-width="4.2" stroke-linecap="round"/><path d="M2.2 2.2L11.8 11.8M11.8 2.2L2.2 11.8" stroke="#ee1818" stroke-width="2.8" stroke-linecap="round"/><path d="M2.4 2.4L7 6.6L11.6 2.4" stroke="#ffb0b0" stroke-width="1.3" fill="none" stroke-linecap="round" opacity="0.9"/></svg>
</body></html>
